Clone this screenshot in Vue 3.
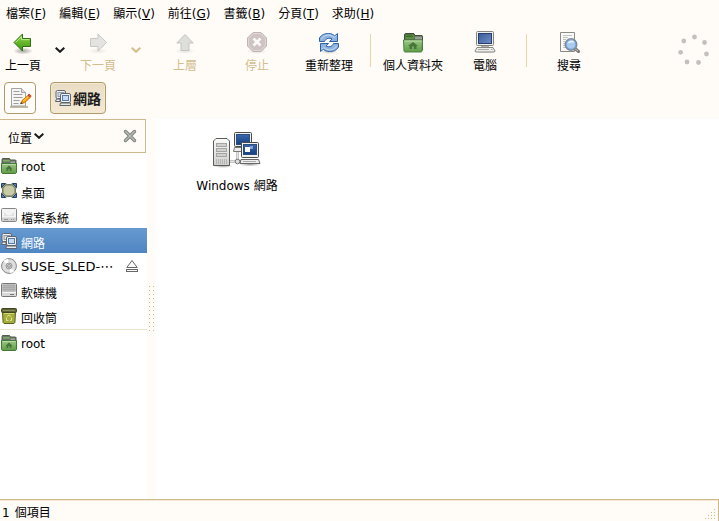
<script setup>
import { ref } from 'vue'

const menus = [
  { text: '檔案', key: 'F' },
  { text: '編輯', key: 'E' },
  { text: '顯示', key: 'V' },
  { text: '前往', key: 'G' },
  { text: '書籤', key: 'B' },
  { text: '分頁', key: 'T' },
  { text: '求助', key: 'H' },
]

const places = [
  { id: 'home', icon: 'folder', label: 'root', latin: true },
  { id: 'desktop', icon: 'desktop', label: '桌面' },
  { id: 'fs', icon: 'drive', label: '檔案系統' },
  { id: 'network', icon: 'network', label: '網路' },
  { id: 'cd', icon: 'disc', label: 'SUSE_SLED-⋯', latin: true, wide: true, eject: true },
  { id: 'floppy', icon: 'floppy', label: '軟碟機' },
  { id: 'trash', icon: 'trash', label: '回收筒' },
]
const bookmarks = [{ id: 'bm-root', icon: 'folder', label: 'root', latin: true }]
const groups = [places, bookmarks]

const selected = ref('network')

const throbberDots = [
  [16.5, 3], [26.5, 8.5], [28.5, 20], [20.5, 28.5], [9, 28], [2.6, 18.3], [5.8, 7],
]
</script>

<template>
  <div class="window">
    <svg class="defs" aria-hidden="true">
      <defs>
        <linearGradient id="gGreen" x1="0" y1="0" x2="0" y2="1">
          <stop offset="0" stop-color="#8fd84a" />
          <stop offset="1" stop-color="#3f9410" />
        </linearGradient>
        <linearGradient id="gFolder" x1="0" y1="0" x2="0" y2="1">
          <stop offset="0" stop-color="#9cc783" />
          <stop offset="1" stop-color="#5f9b48" />
        </linearGradient>
        <linearGradient id="gScreen" x1="0" y1="0" x2="1" y2="1">
          <stop offset="0" stop-color="#3c5c9a" />
          <stop offset="1" stop-color="#6f8cc4" />
        </linearGradient>
        <linearGradient id="gDeep" x1="0" y1="0" x2="0" y2="1">
          <stop offset="0" stop-color="#3a67ae" />
          <stop offset="1" stop-color="#173f7e" />
        </linearGradient>
        <linearGradient id="gGrey" x1="0" y1="0" x2="0" y2="1">
          <stop offset="0" stop-color="#fbfbfb" />
          <stop offset="1" stop-color="#cfcfcc" />
        </linearGradient>
        <radialGradient id="gShadow">
          <stop offset="0" stop-color="#000" stop-opacity=".35" />
          <stop offset="1" stop-color="#000" stop-opacity="0" />
        </radialGradient>

        <symbol id="i-folder" viewBox="0 0 16 16">
          <path d="M1 6V1.500l.5-1h7l1 1.500h5l.5.500V6z" fill="#6b7567" stroke="#4d5d48" />
          <path d="M2 2h6.500l.8 1.600H2z" fill="#7fae63" />
          <path d="M9.600 3.500h4.400v2H9.600z" fill="#a5a9a2" />
          <path d="M.5 5.500h15v9l-.8 1H1.300l-.8-1z" fill="url(#gFolder)" stroke="#45793a" />
          <path d="M1.500 6.500h13" stroke="#b9dca6" />
          <path d="M8 7.500l3.500 3.200h-1V13H8.800v-1.800H7.200V13H5.500v-2.300h-1z" fill="#46753a" />
        </symbol>

        <symbol id="i-desktop" viewBox="0 0 16 16">
          <path d="M1 1h4l1.500.5h3L11 1h4v4l-.5 1.500v2L15 10v4h-4l-1.500-.5h-3L5 14H1v-4l.5-1.500v-2L1 5z" fill="#a5ab95" stroke="#737a6a" />
          <path d="M.5.500h4L.500 4.500zM15.500.500v4l-4-4zM.5 14.500v-4l4 4zM15.500 14.500h-4l4-4z" fill="#5b7faf" stroke="#243f66" />
          <path d="M5.200 2h5.600L14 5.200v4.600L10.800 13H5.200L2 9.800V5.200z" fill="#c9cba6" stroke="#6f7455" />
        </symbol>

        <symbol id="i-drive" viewBox="0 0 16 16">
          <rect x=".5" y=".5" width="15" height="13" rx="1" fill="#f3f3f3" stroke="#858585" />
          <path d="M1 9.500h14v3.500H1z" fill="#cfcfcf" />
          <path d="M3 4q5 7 10 0v4H3z" fill="#e1e1e1" />
          <path d="M3 11.500h4M10 11.500h1M12 11.500h1" stroke="#989898" />
        </symbol>

        <symbol id="i-network" viewBox="0 0 16 16">
          <rect x="1" y=".5" width="9.500" height="8" rx="1.500" fill="#f1f2f3" stroke="#5f656c" />
          <rect x="3" y="2.500" width="6" height="4" fill="#d5dce4" stroke="#8e9bab" />
          <path d="M1.500 9L.5 11.500h4.500V9z" fill="#e9ebed" stroke="#5f656c" />
          <rect x="5.500" y="3.500" width="10" height="9" rx="1.500" fill="#f3f4f5" stroke="#5f656c" />
          <rect x="7.500" y="5.500" width="6" height="5" fill="#c6daf3" stroke="#5679a8" />
          <path d="M5.500 13h10l.3 2.500H4.800z" fill="#e6e8ea" stroke="#5f656c" />
        </symbol>

        <symbol id="i-disc" viewBox="0 0 16 16">
          <circle cx="8" cy="8" r="7.400" fill="#dedede" stroke="#858585" />
          <path d="M8 8L2.500 3A7 7 0 0 1 7 1zM8 8l5.500 5A7 7 0 0 1 9 15z" fill="#fff" />
          <circle cx="8" cy="8" r="3" fill="#cecece" stroke="#999" />
          <circle cx="8" cy="8" r="1.300" fill="#fff" stroke="#888" />
        </symbol>

        <symbol id="i-floppy" viewBox="0 0 16 16">
          <rect x=".5" y=".5" width="15" height="13" rx="1" fill="#d8d8d8" stroke="#777" />
          <rect x="1.500" y="1.500" width="13" height="7" fill="#a9a9a9" />
          <path d="M2 3.500h12M2 5.500h12M2 7.500h12" stroke="#b6b6b6" />
          <path d="M1 9.500h14" stroke="#f4f4f4" />
          <path d="M9 11.500h4" stroke="#777" />
        </symbol>

        <symbol id="i-trash" viewBox="0 0 16 16">
          <path d="M1.500 4.500h13l-.6 10-.9 1H3l-.9-1z" fill="#a5ad3d" stroke="#5c6420" />
          <rect x=".5" y=".5" width="15" height="4" rx="1" fill="#5c6136" stroke="#41461f" />
          <path d="M2 2.500h12" stroke="#868c5a" />
          <path d="M3 5.500h10" stroke="#d3db6a" />
          <path d="M6 8.500l2-1.500 2 1.500M10.500 9.500v3H9M5.500 9.500v3h2" fill="none" stroke="#dfe58f" />
        </symbol>
      </defs>
    </svg>

    <nav class="menubar">
      <button v-for="m in menus" :key="m.key" type="button" class="menu">{{ m.text }}(<u>{{ m.key }}</u>)</button>
    </nav>

    <div class="toolbar" role="toolbar">
      <button type="button" class="tool back">
        <svg viewBox="0 0 24 24" class="ico">
          <ellipse cx="12" cy="20" rx="10" ry="3.500" fill="url(#gShadow)" />
          <path d="M3 11.500L11.500 3v4.500h8v8h-8V20z" fill="url(#gGreen)" stroke="#2f7210" />
          <path d="M4.800 11.300l5.700-5.700v3h8" fill="none" stroke="#b9ec8a" />
        </svg>
        <span>上一頁</span>
      </button>
      <button type="button" class="drop" aria-label="上一頁">
        <svg viewBox="0 0 10 6"><path d="M.7.800L5 4.800 9.300.800" fill="none" stroke="#1a1a1a" stroke-width="2" /></svg>
      </button>
      <button type="button" class="tool forward" disabled>
        <svg viewBox="0 0 24 24" class="ico">
          <ellipse cx="12" cy="20" rx="10" ry="3" fill="url(#gShadow)" opacity=".25" />
          <path d="M20.500 11.500L12 3v4.500H4.500v8H12V20z" fill="#e3e3e1" stroke="#c8c8c5" />
        </svg>
        <span>下一頁</span>
      </button>
      <button type="button" class="drop last" disabled aria-label="下一頁">
        <svg viewBox="0 0 10 6"><path d="M.7.800L5 4.800 9.300.800" fill="none" stroke="#d2bd8c" stroke-width="2" /></svg>
      </button>
      <button type="button" class="tool" disabled>
        <svg viewBox="0 0 24 24" class="ico">
          <ellipse cx="12" cy="20" rx="10" ry="3" fill="url(#gShadow)" opacity=".3" />
          <path d="M12 3.500l8.200 8.500H16v7.500H8V12H3.800z" fill="#dededb" stroke="#c4c4c1" />
        </svg>
        <span>上層</span>
      </button>
      <button type="button" class="tool" disabled>
        <svg viewBox="0 0 24 24" class="ico">
          <ellipse cx="12" cy="20" rx="10" ry="3" fill="url(#gShadow)" opacity=".4" />
          <path d="M8 1.500h8l5.500 5.500v8L16 20.500H8L2.500 15V7z" fill="#cfc4c3" stroke="#bdb4b3" />
          <path d="M8.400 2.500h7.200l4.900 4.900v7.200l-4.900 4.900H8.400l-4.900-4.900V7.400z" fill="none" stroke="#e0d8d7" />
          <path d="M8.500 7.500l7 7m0-7l-7 7" stroke="#fbfafa" stroke-width="2.500" />
        </svg>
        <span>停止</span>
      </button>
      <button type="button" class="tool">
        <svg viewBox="0 0 24 24" class="ico">
          <ellipse cx="12" cy="20.500" rx="9" ry="2.500" fill="url(#gShadow)" opacity=".7" />
          <g fill="#8fb4e0" stroke="#2d62a8" stroke-linejoin="round">
            <path d="M2.500 10.500V7C4.500 3.500 8 2.500 11.500 2.500c2.700 0 4.800 1 6.200 2.300L20.500 2.500V10.500h-8l2.500-2.500C12.500 6.500 9 7 7.500 10.500z" />
            <path d="M21.500 12.500V16C19.500 19.500 16 20.500 12.500 20.500c-2.700 0-4.800-1-6.200-2.300L3.500 20.500V12.500h8L9 15c2.500 1.500 6 1 7.500-2.500z" />
          </g>
          <path d="M4.500 8c3-5 9-5 12.700-1.600L19.500 4.500M19.500 15c-3 5-9 5-12.700 1.600L4.500 18.500" fill="none" stroke="#c8ddf5" />
        </svg>
        <span>重新整理</span>
      </button>
      <div class="sep"></div>
      <button type="button" class="tool">
        <svg viewBox="0 0 24 24" class="ico">
          <path d="M3.500 19V3.200l.8-.7h8.500l1.200 2h7l.5.700V19z" fill="#53604d" stroke="#3e5134" />
          <path d="M4.500 3.500h8l1 2v2.500h-9z" fill="#5d9142" />
          <path d="M5 5.500h7M6 3.500v2M8 3.500v2M10 3.500v2" stroke="#3d6b2d" />
          <path d="M14 5.500h7v3h-7z" fill="#9b9d99" />
          <path d="M2.500 9h19l-.5 11.300-.8.7H3.800l-.8-.7z" fill="url(#gFolder)" stroke="#4d8440" />
          <path d="M3.500 10h17" stroke="#bcdcab" />
          <path d="M12 11l5 4h-1.500v3H13v-2.500h-2V18H8.500v-3H7z" fill="#48753a" />
        </svg>
        <span>個人資料夾</span>
      </button>
      <button type="button" class="tool">
        <svg viewBox="0 0 24 24" class="ico">
          <ellipse cx="13" cy="20" rx="11" ry="2.500" fill="url(#gShadow)" />
          <rect x="3.500" y=".5" width="17" height="14" rx="1" fill="#eeeeec" stroke="#85857e" />
          <rect x="5.500" y="2.500" width="13" height="10" fill="url(#gScreen)" stroke="#263f70" />
          <path d="M8 15h8v2H8z" fill="#aaa" />
          <path d="M4 16.500h16l2 3.500-.7 1H2.700L2 20z" fill="#ededeb" stroke="#888883" />
          <path d="M5 18.500h11M18 18.500h1.500" stroke="#aaa" />
        </svg>
        <span>電腦</span>
      </button>
      <div class="sep"></div>
      <button type="button" class="tool">
        <svg viewBox="0 0 24 24" class="ico">
          <path d="M3.500 1.500h14v19h-14z" fill="#fafafa" stroke="#8b8b87" />
          <path d="M6 4.500h9M6 6.500h5M6 8.500h3M6 10.500h2M6 12.500h2M6 14.500h3M6 16.500h4" stroke="#c2c2c0" />
          <path d="M18 17.500l3.500 3" stroke="#777" stroke-width="3" stroke-linecap="round" />
          <path d="M18 17.500l3 2.700" stroke="#ccc" />
          <circle cx="14" cy="13.500" r="5.800" fill="#a9cbf0" stroke="#85898e" stroke-width="1.400" />
          <circle cx="14" cy="13.500" r="4.700" fill="none" stroke="#6d9fe0" />
          <path d="M10.500 12.500q1-3 4.500-3 2 0 2.500 2-4-.5-7 1z" fill="#e5f1ff" />
        </svg>
        <span>搜尋</span>
      </button>
      <svg class="throbber" viewBox="0 0 32 32" aria-hidden="true">
        <circle v-for="([x, y], i) in throbberDots" :key="i" :cx="x" :cy="y" r="2.400" fill="#c2c1c0" />
      </svg>
    </div>

    <div class="location">
      <button type="button" class="box edit" aria-label="編輯">
        <svg viewBox="0 0 24 24" class="ico">
          <path d="M2 21h18" stroke="#c4b8a2" stroke-width="2" />
          <path d="M3.500 2.500h10l4 4v13.500h-14z" fill="#f6f6f6" stroke="#a3a39f" />
          <path d="M13.500 2.500v4h4" fill="#ddd" stroke="#a3a39f" />
          <path d="M5.500 5.500h6M5.500 8.500h9M5.500 11.500h9M5.500 14.500h6M5.500 17.500h5" stroke="#9c9c9a" />
          <path d="M13.500 17.500l.5-3 6-5 2 2.200-5.500 5z" fill="#f8a313" stroke="#d07208" />
          <path d="M15 15l5.300-4.500" stroke="#ffd65a" />
          <path d="M20 9l1.200-1 2 2.200-1.200 1z" fill="#e05325" stroke="#c04a22" />
          <path d="M12 18.200l1-2.200 1.700 1.500z" fill="#333" />
        </svg>
      </button>
      <button type="button" class="box path">
        <svg class="small"><use href="#i-network" /></svg>
        <strong>網路</strong>
      </button>
    </div>

    <div class="panes">
      <aside class="sidebar">
        <header class="sidehead">
          <button type="button" class="chooser">
            <span>位置</span>
            <svg viewBox="0 0 10 6"><path d="M.7.800L5 4.800 9.300.800" fill="none" stroke="#1a1a1a" stroke-width="2" /></svg>
          </button>
          <button type="button" class="close" aria-label="關閉">
            <svg viewBox="0 0 14 14">
              <path d="M2.500 2.500l9 9m0-9l-9 9" stroke="#7d817b" stroke-width="3.400" stroke-linecap="round" />
              <path d="M2.500 2.500l9 9m0-9l-9 9" stroke="#bcbfba" stroke-width="1.400" stroke-linecap="round" />
            </svg>
          </button>
        </header>
        <ul v-for="(g, i) in groups" :key="i" class="places">
          <li v-for="p in g" :key="p.id" :class="{ selected: selected === p.id }">
            <button type="button" class="place" :class="{ latin: p.latin, wide: p.wide }" @click="selected = p.id">
              <svg class="small"><use :href="'#i-' + p.icon" /></svg>
              <span>{{ p.label }}</span>
            </button>
            <button v-if="p.eject" type="button" class="eject" aria-label="退出">
              <svg viewBox="0 0 14 14">
                <path d="M7 1.500L12.200 8.500H1.800z" fill="#fafafa" stroke="#666" />
                <rect x="1.500" y="10.500" width="11" height="2" fill="#fafafa" stroke="#666" />
              </svg>
            </button>
          </li>
        </ul>
      </aside>
      <div class="splitter" role="separator"><i class="grip"></i></div>
      <main class="files">
        <button type="button" class="file">
          <svg viewBox="0 0 48 36">
            <ellipse cx="10" cy="34" rx="10" ry="2" fill="url(#gShadow)" />
            <ellipse cx="37" cy="32.500" rx="11" ry="2" fill="url(#gShadow)" />
            <path d="M16 29.500h13M24.500 17v12" fill="none" stroke="#8b8b87" stroke-width="2" />
            <path d="M17 29.500h11M24.500 18v10" fill="none" stroke="#e4e4e2" />
            <circle cx="24.500" cy="29.500" r="2.300" fill="#ddd" stroke="#777" />
            <path d="M.5 33.500V9L3 6.500h11L16.500 9v24.500z" fill="url(#gGrey)" stroke="#5c5c58" />
            <rect x="3.500" y="11.500" width="10" height="3" fill="#d0d0ce" stroke="#a4a4a2" />
            <rect x="3.500" y="16.500" width="10" height="3" fill="#d0d0ce" stroke="#a4a4a2" />
            <rect x="3.500" y="21.500" width="10" height="3" fill="#d0d0ce" stroke="#a4a4a2" />
            <path d="M3.500 27v5M5.500 27v5M7.500 27v5M9.500 27v5M11.500 27v5M13.500 27v5" stroke="#b4b4b4" />
            <rect x="21.500" y=".5" width="17" height="14" rx="1" fill="#f0f0ee" stroke="#4a4a48" />
            <rect x="23.500" y="2.500" width="13" height="10" fill="url(#gDeep)" stroke="#2b4d80" />
            <path d="M21.500 15.500h16l2 4h-19z" fill="#ededeb" stroke="#777" />
            <rect x="28.500" y="10.500" width="17" height="15" rx="1" fill="#f0f0ee" stroke="#4a4a48" />
            <rect x="30.500" y="12.500" width="13" height="10" fill="url(#gDeep)" stroke="#2b4d80" />
            <rect x="32" y="15" width="5" height="5" fill="#fff" />
            <rect x="37" y="14" width="3" height="3" fill="#86a4d2" />
            <path d="M28 27.500h17.500l1.500 4H27z" fill="#ededeb" stroke="#666" />
            <path d="M30 29.500h13" stroke="#aaa" />
          </svg>
          <span>Windows 網路</span>
        </button>
      </main>
    </div>

    <footer class="status">
      <p class="count"><span>1</span> <span>個項目</span></p>
      <svg class="resize" viewBox="0 0 12 12" aria-hidden="true">
        <path d="M10 1h1v1h-1zM7 4h1v1H7zM10 4h1v1h-1zM4 7h1v1H4zM7 7h1v1H7zM10 7h1v1h-1zM1 10h1v1H1zM4 10h1v1H4zM7 10h1v1H7zM10 10h1v1h-1z" fill="#cdb98b" />
      </svg>
    </footer>
  </div>
</template>

<style>
body {
  margin: 0;
}
</style>

<style scoped>
.window {
  display: flex;
  flex-direction: column;
  min-height: 100vh;
  background: #fffcf8;
  color: #000;
  font: 12px/16px "DejaVu Sans", "Noto Sans CJK TC", sans-serif;
}
.window * {
  box-sizing: border-box;
}
.defs {
  position: absolute;
  width: 0;
  height: 0;
}
svg {
  display: block;
  flex: none;
}
button {
  margin: 0;
  padding: 0;
  border: 0;
  background: none;
  color: inherit;
  font: inherit;
  white-space: nowrap;
}
.menubar {
  display: flex;
  gap: 13px;
  padding: 6px 6px 8px;
}
.menu u {
  text-underline-offset: 1px;
}
.toolbar {
  display: flex;
  align-items: flex-start;
  height: 48px;
}
.tool {
  display: flex;
  flex-direction: column;
  align-items: center;
  gap: 3px;
  width: 72px;
  padding-top: 1px;
}
.tool.back {
  width: 46px;
}
.tool.forward {
  width: 48px;
}
.tool:disabled {
  color: #d2bd8c;
}
.ico {
  width: 24px;
  height: 24px;
}
.drop {
  width: 28px;
  padding: 17px 9px 0;
}
.drop.last {
  width: 27px;
}
.drop svg,
.chooser svg {
  width: 10px;
  height: 6px;
}
.sep {
  width: 1px;
  height: 33px;
  margin: 4px 6px 0 5px;
  background: #e6d6a9;
}
.throbber {
  width: 32px;
  height: 32px;
  margin: 4px 9px 0 auto;
}
.location {
  display: flex;
  gap: 14px;
  padding: 4px 4px 5px;
}
.box {
  display: flex;
  align-items: center;
  height: 32px;
  border: 1px solid #b09a6c;
  border-radius: 4px;
  background: #fffdfa;
}
.edit {
  padding: 0 3px;
}
.path {
  gap: 2px;
  padding: 0 4px;
  background: linear-gradient(#e9dcc4, #f4e9d4);
  box-shadow: inset 0 0 0 1px #f3e8d0;
}
.path strong {
  padding-top: 1px;
  font-size: 14px;
  color: #1a1a1a;
}
.small {
  width: 16px;
  height: 16px;
}
.panes {
  display: flex;
  flex: 1;
}
.sidebar {
  width: 147px;
  background: #fff;
}
.sidehead {
  display: flex;
  align-items: center;
  justify-content: space-between;
  height: 34px;
  margin-right: 1px;
  padding: 0 8px;
  border: 1px solid #cdb98b;
  border-left: 0;
  background: #fffcf8;
}
.chooser {
  display: flex;
  align-items: center;
  gap: 2px;
  padding-top: 6px;
}
.chooser svg {
  margin-bottom: 6px;
}
.close svg,
.eject svg {
  width: 14px;
  height: 14px;
}
.places {
  margin: 0;
  padding: 0;
  list-style: none;
}
.places + .places {
  margin-top: 1px;
  border-top: 1px solid #eee3ca;
}
.places li {
  display: flex;
  align-items: center;
  height: 25px;
}
.places .selected {
  background: linear-gradient(#6699d0, #4f86c2);
  color: #fff;
}
.place {
  display: flex;
  flex: 1;
  align-items: center;
  gap: 4px;
  padding-left: 1px;
}
.place span {
  padding-top: 6px;
}
.place.latin span {
  padding-top: 2px;
}
.place.wide {
  font-size: 13px;
}
.eject {
  padding-right: 8px;
}
.splitter {
  display: flex;
  align-items: center;
  justify-content: center;
  width: 8px;
}
.grip {
  width: 5px;
  height: 47px;
  background: conic-gradient(from 270deg at 1px 1px, #cfb67f 90deg, transparent 0) 0 0 / 4px 4px;
}
.files {
  flex: 1;
  padding: 13px 34px;
  background: #fff;
}
.file {
  display: flex;
  flex-direction: column;
  align-items: center;
  gap: 10px;
  width: 96px;
}
.file svg {
  width: 48px;
  height: 36px;
}
.status {
  display: flex;
  align-items: flex-end;
  justify-content: space-between;
  height: 22px;
  padding-left: 2px;
  border-top: 1px solid #cdb98b;
  border-right: 1px solid #cdb98b;
  box-shadow: inset 0 1px #f3e9d3;
}
.count {
  display: flex;
  gap: 5px;
  margin: 0;
}
.resize {
  width: 12px;
  height: 12px;
  margin: 0 2px 1px 0;
}
</style>
